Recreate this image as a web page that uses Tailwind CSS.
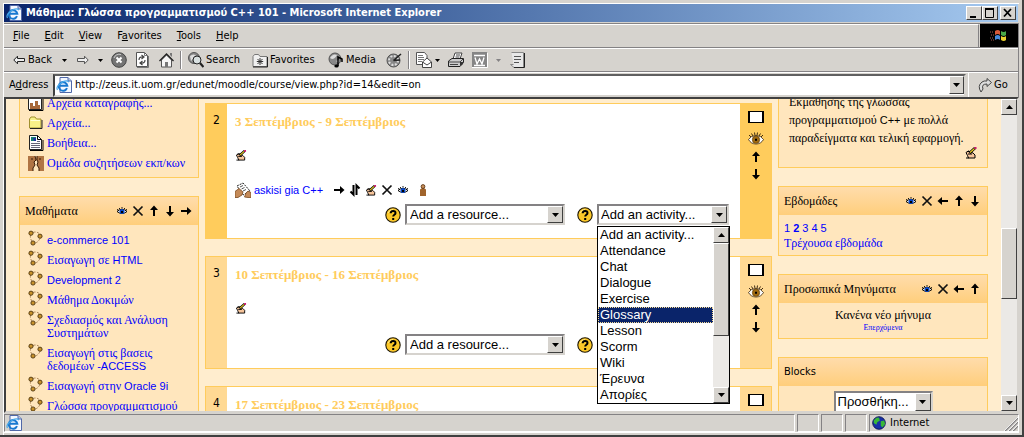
<!DOCTYPE html>
<html lang="el">
<head>
<meta charset="utf-8">
<title>Μάθημα: Γλώσσα προγραμματισμού C++ 101 - Microsoft Internet Explorer</title>
<script src="https://cdn.jsdelivr.net/npm/@tailwindcss/browser@4"></script>
</head>
<body class="h-screen overflow-hidden bg-[#d6d3ce] font-['DejaVu_Sans_Condensed','DejaVu_Sans',sans-serif] text-[11px] leading-4 text-black">
<svg class="hidden" aria-hidden="true">
  <symbol id="ie" viewBox="0 0 16 16"><path d="M4 .5h8l3.500 3.500v11.500H4z" fill="#f4f8ff" stroke="#5068a8"/><path d="M12 .5V4h3.500" fill="#b8c8e8" stroke="#5068a8"/><path d="M11 11.200A4.300 4.300 0 1 1 11.300 8.700H4" fill="none" stroke="#1878d0" stroke-width="2"/><path d="M1.500 13C-1 9 9 1.500 13 5" fill="none" stroke="#48a8e8" stroke-width="1.200"/></symbol>
  <symbol id="arr-r" viewBox="0 0 16 16"><path d="M3 7h6V4l4.500 4L9 12V9H3z" fill="#000"/></symbol>
  <symbol id="arr-l" viewBox="0 0 16 16"><path d="M13 7H7V4L2.500 8 7 12V9h6z" fill="#000"/></symbol>
  <symbol id="arr-u" viewBox="0 0 16 16"><path d="M7 13V7H4l4-4.500L12 7H9v6z" fill="#000"/></symbol>
  <symbol id="arr-d" viewBox="0 0 16 16"><path d="M7 3v6H4l4 4.500L12 9H9V3z" fill="#000"/></symbol>
  <symbol id="updown" viewBox="0 0 16 16"><path d="M6.500 3v9.500L3.500 9.500M9.500 13V3.500l3 3" fill="none" stroke="#000" stroke-width="2"/></symbol>
  <symbol id="cross" viewBox="0 0 16 16"><path d="m3.500 3.500 9 9M12.500 3.500l-9 9" fill="none" stroke="#111" stroke-width="1.700"/></symbol>
  <symbol id="eye" viewBox="0 0 16 16"><path d="M3 8.500Q8 4 13 8.500 8 12.500 3 8.500z" fill="#fff" stroke="#000"/><circle cx="8" cy="8.500" r="2.500" fill="#0848c8"/><path d="M7 8h2v2H7z" fill="#000"/><path d="M3 6.500 4.500 7M5 5l1 1M8 4v1.500M11 5l-1 1M13 6.500 11.500 7" stroke="#000" stroke-width=".9"/></symbol>
  <symbol id="bigeye" viewBox="0 0 16 16"><path d="M.5 9.500Q3 5.500 8 5.500t7.500 4Q13 14 8 14T.5 9.500z" fill="#fff" stroke="#3a2408" stroke-width=".8"/><circle cx="8" cy="9.700" r="3.700" fill="#a06a10" stroke="#5a3a08" stroke-width=".6"/><path d="M7 8.700h2v2H7z" fill="#000"/><path d="M1 5l2 2M3.500 3.500 5 6M6.500 2.500 7 5.500M9.500 2.500 9 5.500M12.500 3.500 11 6M15 5l-2 2" stroke="#2a1804" stroke-width=".9"/></symbol>
  <symbol id="write" viewBox="0 0 12 12"><path d="M1 5.500 3.500 4 8 6l2 2v3H3.500L2.500 8.500z" fill="#f6c49a" stroke="#000"/><path d="M1 11h3M2 4.500h3M3 7h4" stroke="#000"/><path d="M4.500 6 10 1" stroke="#000" stroke-width="2.600"/><path d="M5 5.500 9.500 1.500" stroke="#f0d020" stroke-width="1.200"/><path d="M9.500 0h2v2h-2z" fill="#d01870"/></symbol>
  <symbol id="person" viewBox="0 0 8 12"><path d="M1 5.500 3 4h2l2 1.500V12H1z" fill="#a0642c"/><circle cx="4" cy="2.500" r="1.900" fill="#c8905c" stroke="#502808" stroke-width=".8"/></symbol>
  <symbol id="assign" viewBox="0 0 16 16"><path d="m2 4 6-3 7 8-7 4z" fill="#fff" stroke="#222" stroke-dasharray="2 1"/><path d="M5 5l3-1.500M6.500 7l3-1.500M8 9l3-1.500" stroke="#555"/><path d="M0 9.500 4 6.500l4 3.500-1 3-4 2.500H0zM9.500 15l1.500-4 2-2 3 1.500v5h-3z" fill="#c48a58" stroke="#7a4a20" stroke-width=".8"/></symbol>
  <symbol id="help" viewBox="0 0 16 16"><circle cx="8" cy="8" r="7.200" fill="#fcc828" stroke="#1c1400" stroke-width="1.100"/><path d="M3 6a5.500 5.500 0 0 1 5-3.500" stroke="#ffec90" fill="none"/><path d="M5.700 6.200c0-3 4.800-3 4.800-.3C10.500 7.800 8.200 7.600 8.200 9.500M8.200 11v2" fill="none" stroke="#000" stroke-width="2"/></symbol>
  <symbol id="course" viewBox="0 0 16 16"><path d="M5 2.500q4-1.500 6.500 1.500M12 8.500q-2 4-5 4.500M2.500 5q-.5 4 1.500 6" fill="none" stroke="#9a7040" stroke-width=".8" stroke-dasharray="2.500 1.500"/><g fill="#c8922c" stroke="#3c2808" stroke-width=".8"><circle cx="3" cy="3.200" r="2.100"/><circle cx="12" cy="6.200" r="2.100"/><circle cx="5" cy="13" r="2.100"/></g></symbol>
  <symbol id="folder" viewBox="0 0 16 16"><path d="M1.500 4 3 2h4l1.500 2H13v9H1.500z" fill="#f8f088" stroke="#a09030"/><path d="M2 13.500h12V5" stroke="#222" fill="none"/><path d="M2.500 5.500H12" stroke="#ffffd8"/></symbol>
  <symbol id="doc" viewBox="0 0 16 16"><path d="M1.500.5h8l4 4v10h-12z" fill="#fff" stroke="#222"/><path d="M9.500.5v4h4M2 15.500h13V5" fill="none" stroke="#000"/><path d="M3 2h5v4H3z" fill="#188070"/><path d="M5 3h3v3H6z" fill="#2030a0"/><path d="M9 6.500h3M3 8.500h9M3 10.500h9M3 12.500h9" stroke="#667"/></symbol>
  <symbol id="faces" viewBox="0 0 16 16"><path d="M0 1h7l1 4-2 2 1 3-2 3v3H0zM16 1H9L8 5l2 2-1 3 2 3v3h5z" fill="#b07444"/><path d="M7 1 8 5 6 7l1 3-2 3v3M9 1v4l1 2-1 3 2 3v3M3 4h2M11 4h2" stroke="#3a1c08" fill="none"/></symbol>
  <symbol id="log" viewBox="0 0 16 16"><path d="M.5.500h13v14H.5z" fill="#fff" stroke="#222"/><path d="M2 14V8h3v3h2V6h3v4h2v4z" fill="#a86838"/><path d="M1 15.500h14V2" stroke="#000" fill="none"/></symbol>
  <symbol id="tri-d" viewBox="0 0 7 4"><path d="M0 0h7L3.500 4z"/></symbol>
  <symbol id="tri-u" viewBox="0 0 7 4"><path d="M0 4h7L3.500 0z"/></symbol>
</svg>

<div class="flex h-full flex-col border-r-2 border-b-2 border-[#404040] p-[3px] pb-0">
<div class="flex min-h-0 flex-1 flex-col border-t border-l border-white">

<header class="mr-px flex h-[19px] shrink-0 items-center gap-1 border-b border-[#d6d3ce] bg-linear-to-r from-[#0a246a] to-[#a6caf0] bg-clip-padding px-[2px] text-white">
  <svg class="size-4"><use href="#ie"/></svg>
  <h1 class="flex-1 whitespace-nowrap text-[11px] font-bold">Μάθημα: Γλώσσα προγραμματισμού C++ 101 - Microsoft Internet Explorer</h1>
  <div class="flex text-black">
    <button aria-label="Minimize" class="h-[14px] w-4 border border-white border-r-[#404040] border-b-[#404040] bg-[#d6d3ce]"><svg viewBox="0 0 14 12" class="size-full"><path d="M3 9h6v2H3z"/></svg></button>
    <button aria-label="Maximize" class="h-[14px] w-4 border border-white border-r-[#404040] border-b-[#404040] bg-[#d6d3ce]"><svg viewBox="0 0 14 12" class="size-full"><path d="M2.500 2v8.500h8V2M2 2h9" fill="none" stroke="#000"/><path d="M2 1h9v2H2z"/></svg></button>
    <button aria-label="Close" class="ml-[2px] h-[14px] w-4 border border-white border-r-[#404040] border-b-[#404040] bg-[#d6d3ce]"><svg viewBox="0 0 14 12" class="size-full"><path d="m3 2 7 7.500M10 2 3 9.500" stroke="#000" stroke-width="1.800"/></svg></button>
  </div>
</header>

<div class="shrink-0 border-t border-r border-[#848284]">
<nav class="flex h-6 items-stretch border-b border-[#848284]">
  <div class="flex flex-1 items-center gap-[15px] border-t border-r border-t-white border-r-[#848284] pl-[9px]">
    <button><u>F</u>ile</button><button><u>E</u>dit</button><button><u>V</u>iew</button><button>F<u>a</u>vorites</button><button><u>T</u>ools</button><button><u>H</u>elp</button>
  </div>
  <div class="ml-px flex w-[38px] items-center justify-center bg-black">
    <svg viewBox="0 0 20 16" class="h-4 w-5"><path d="M6 3q3-2 5 0v4q-2-2-5 0z" fill="#d85838"/><path d="M12 3q3 2 5 0v4q-2 2-5 0z" fill="#48a848"/><path d="M6 8q3-2 5 0v4q-2-2-5 0z" fill="#4888d8"/><path d="M12 8q3 2 5 0v4q-2 2-5 0z" fill="#e8d030"/><path d="M1 4h3M2 7h3M1 10h3M2 12h3" stroke="#a85850" stroke-dasharray="1 1"/></svg>
  </div>
</nav>
<div class="flex h-6 items-center border-t border-b border-t-white border-b-[#848284] pl-[9px]">
  <button class="flex w-[49px] items-center gap-[3px]"><svg viewBox="0 0 12 10" class="h-[10px] w-3"><path d="M.8 5 4.500 1.200V3.500h7v3h-7v2.300z" fill="#eee" stroke="#222"/></svg>Back</button>
  <svg class="h-[3px] w-[5px]"><use href="#tri-d"/></svg>
  <button aria-label="Forward" class="ml-[10px]"><svg viewBox="0 0 12 10" class="h-[10px] w-3"><path d="M11.200 5 7.500 1.200V3.500h-7v3h7v2.300z" fill="#eee" stroke="#555"/></svg></button>
  <svg class="ml-[9px] h-[3px] w-[5px]"><use href="#tri-d"/></svg>
  <button aria-label="Stop" class="ml-2"><svg viewBox="0 0 16 16" class="size-4"><circle cx="8" cy="8" r="7.300" fill="#747474" stroke="#444"/><path d="M3 6a5.500 5.500 0 0 1 7-3.500" stroke="#ccc" fill="none"/><path d="m5.500 5.500 5 5M10.500 5.500l-5 5" stroke="#fff" stroke-width="2"/></svg></button>
  <button aria-label="Refresh" class="ml-2"><svg viewBox="0 0 14 16" class="h-4 w-[14px]"><path d="M1.500.5h8l3 3v11h-11z" fill="#fff" stroke="#555"/><path d="M9.500.5v3h3M2 15.500h11.500V4" fill="none" stroke="#777"/><path d="M4 8q0-3.500 4-3M6.500 3 9 5 6.500 7M10 8q0 3.500-4 3M7.500 9 5 11l2.500 2" fill="none" stroke="#444" stroke-width="1.200"/></svg></button>
  <button aria-label="Home" class="ml-[10px]"><svg viewBox="0 0 15 16" class="h-4 w-[15px]"><path d="M2.500 8v7h10V8l-5-5z" fill="#f6f6f6" stroke="#555"/><path d="m.5 9 7-7 7 7" fill="none" stroke="#222" stroke-width="1.300"/><path d="M11 1h2v4l-2-2z" fill="#777"/><path d="M6 10h3v5H6z" fill="#777"/></svg></button>
  <i class="mx-[6px] h-[18px] w-[2px] border-l border-[#848284] bg-white"></i>
  <button class="flex w-16 items-center gap-[2px]"><svg viewBox="0 0 16 16" class="size-4"><circle cx="6" cy="6" r="5.500" fill="#888" stroke="#555"/><path d="M2 4q4-3 6 0-2 2-5 5" fill="#ddd"/><circle cx="9" cy="8" r="4" fill="#d8e0e0" stroke="#222"/><path d="m12 11 3.500 4" stroke="#222" stroke-width="2.200"/></svg>Search</button>
  <button class="flex w-[76px] items-center gap-[2px]"><svg viewBox="0 0 16 16" class="size-4"><path d="M1 4.500 2.500 2.500h4L8 4.500h7v10H1z" fill="#f0f0f0" stroke="#777"/><path d="M1 15h14.500V5" fill="none" stroke="#222"/><path d="M8 6v7M4.800 9.500h6.400M5.500 7l5 5M10.500 7l-5 5" stroke="#333"/></svg>Favorites</button>
  <button class="flex w-[58px] items-center gap-[2px]"><svg viewBox="0 0 16 16" class="size-4"><circle cx="7" cy="7" r="6" fill="#888" stroke="#555"/><path d="M2 6q3-5 7-3-2 4-5 4zM8 9l3-1v3z" fill="#ddd"/><path d="M10 14V5l4 2v3" fill="none" stroke="#000" stroke-width="1.500"/><ellipse cx="8.500" cy="14" rx="2.200" ry="1.500"/></svg>Media</button>
  <button aria-label="History"><svg viewBox="0 0 16 16" class="size-4"><circle cx="7.500" cy="8.500" r="6.500" fill="#888" stroke="#555"/><circle cx="7.500" cy="8.500" r="4.500" fill="none" stroke="#ddd" stroke-width="2" stroke-dasharray="2 1.500"/><path d="M7.500 8.500 15 2M7.500 8.500 14 8" stroke="#222" stroke-width="1.600"/></svg></button>
  <i class="mx-[6px] h-[18px] w-[2px] border-l border-[#848284] bg-white"></i>
  <button aria-label="Mail"><svg viewBox="0 0 16 16" class="size-4"><path d="M.5.500h8l2.500 3v9H.5z" fill="#fff" stroke="#555"/><path d="M2 3.500h5M2 5.500h6M2 7.500h6M2 9.500h4" stroke="#777"/><path d="M6.500 10 11 6l4.500 4v5.500h-9z" fill="#fff" stroke="#444"/><path d="m6.500 10 4.500 3 4.500-3" fill="none" stroke="#444"/></svg></button>
  <svg class="ml-[3px] h-[3px] w-[5px]"><use href="#tri-d"/></svg>
  <button aria-label="Print" class="ml-2"><svg viewBox="0 0 16 16" class="size-4"><path d="M5 7 7 1h7l-2 6z" fill="#fff" stroke="#444"/><path d="M.5 9 4 6.500h11.500v4L12 14.500H.5z" fill="#ccc" stroke="#222"/><path d="M.5 10H12l3-3M2 12.500h8M8 3h4M7.500 5h4" fill="none" stroke="#444"/><path d="M12 10h3v2l-3 2z" fill="#333"/></svg></button>
  <button aria-label="Edit with Word" class="ml-2"><svg viewBox="0 0 16 16" class="size-4"><path d="M0 0h15v15H0z" fill="#858585"/><path d="M2 3.500h11M3 5.500 5 12l2.500-5L10 12l2-6.500M2 13.500h11" fill="none" stroke="#fff" stroke-width="1.300"/><path d="M0 15.500h15.500V1" fill="none" stroke="#fff"/></svg></button>
  <svg class="ml-2 h-[3px] w-[5px] fill-[#848284]"><use href="#tri-d"/></svg>
  <button aria-label="Discuss" class="ml-[9px]"><svg viewBox="0 0 16 16" class="size-4"><path d="M1.500.5h12v15H4l-3.500-3h3" fill="#e8e8e8" stroke="#888"/><path d="M14.500 1v14.500H4" fill="none" stroke="#222"/><path d="M4 4.500h7M4 7.500h7M4 10.500h5" stroke="#555"/></svg></button>
</div>
<form class="flex h-[25px] items-center border-t border-white pl-[5px]">
  <label for="addr" class="w-11">A<u>d</u>dress</label>
  <div class="flex h-[23px] flex-1 items-center border-2 border-[#404040] border-t-[#606060] border-r-[#d6d3ce] border-b-[#d6d3ce] bg-white pl-px">
    <svg class="size-4"><use href="#ie"/></svg>
    <input id="addr" class="ml-[3px] min-w-0 flex-1 bg-white outline-none" value="http://zeus.it.uom.gr/edunet/moodle/course/view.php?id=14&amp;edit=on">
    <button type="button" aria-label="Address list" class="flex h-[18px] w-[15px] items-center justify-center border border-white border-r-[#404040] border-b-[#404040] bg-[#d6d3ce]"><svg class="h-1 w-[7px]"><use href="#tri-d"/></svg></button>
  </div>
  <button type="button" class="ml-[2px] flex h-full w-[50px] items-center gap-[2px] border-l border-white pl-[9px]"><svg viewBox="0 0 14 16" class="h-4 w-[14px]"><path d="M3 15Q-1 9 4 5q2-1.500 5-1V1.500l4.500 4L9 9.500V7Q3 7 5 12z" fill="#ddd" stroke="#444"/></svg>Go</button>
</form>
</div>

<div class="flex min-h-0 flex-1 border-2 border-[#404040] border-r-[#d6d3ce] border-b-[#d6d3ce] bg-[#ffedce]">
<main class="grid min-w-0 flex-1 grid-cols-[180px_1fr_210px] gap-[6px] overflow-hidden px-[13px] font-['Liberation_Serif',serif] text-[12px]">

  <aside class="flex min-w-0 flex-col gap-[18px]">
    <section class="-mt-[6px] border border-t-0 border-[#ffcc5c] bg-[#ffe6bd] px-2 pb-1 leading-5">
      <a href="#" class="flex items-center gap-[3px] text-[#0000ff]"><svg class="size-4"><use href="#log"/></svg>Αρχεία καταγραφής...</a>
      <a href="#" class="flex items-center gap-[3px] text-[#0000ff]"><svg class="size-4"><use href="#folder"/></svg>Αρχεία...</a>
      <a href="#" class="flex items-center gap-[3px] text-[#0000ff]"><svg class="size-4"><use href="#doc"/></svg>Βοήθεια...</a>
      <a href="#" class="flex items-center gap-[3px] whitespace-nowrap text-[#0000ff]"><svg class="size-4"><use href="#faces"/></svg>Ομάδα συζητήσεων εκπ/κων</a>
    </section>
    <section class="border border-[#ffcc5c] bg-[#ffe6bd]">
      <div class="flex h-7 items-center bg-linear-to-b from-[#ffdcab] to-[#ffce7b] pr-1 pl-[5px]">
        <h2 class="flex-1">Μαθήματα</h2>
        <svg class="size-4"><use href="#eye"/></svg><svg class="size-4"><use href="#cross"/></svg><svg class="size-4"><use href="#arr-u"/></svg><svg class="size-4"><use href="#arr-d"/></svg><svg class="size-4"><use href="#arr-r"/></svg>
      </div>
      <ul class="pt-[5px] pl-2 leading-[13px] text-[#0000ff]">
        <li class="flex gap-[3px] pb-[7px]"><svg class="-mb-1 size-4 shrink-0"><use href="#course"/></svg><a href="#" class="-mb-1 pt-1 font-['Liberation_Sans',sans-serif] text-[11px]">e-commerce 101</a></li>
        <li class="flex gap-[3px] pb-[7px]"><svg class="-mb-1 size-4 shrink-0"><use href="#course"/></svg><a href="#" class="-mb-1 pt-1">Εισαγωγη σε <span class="font-['Liberation_Sans',sans-serif] text-[11px]">HTML</span></a></li>
        <li class="flex gap-[3px] pb-[7px]"><svg class="-mb-1 size-4 shrink-0"><use href="#course"/></svg><a href="#" class="-mb-1 pt-1 font-['Liberation_Sans',sans-serif] text-[11px]">Development 2</a></li>
        <li class="flex gap-[3px] pb-[7px]"><svg class="-mb-1 size-4 shrink-0"><use href="#course"/></svg><a href="#" class="-mb-1 pt-1">Μάθημα Δοκιμών</a></li>
        <li class="flex gap-[3px] pb-[7px]"><svg class="-mb-1 size-4 shrink-0"><use href="#course"/></svg><a href="#" class="-mb-1 pt-1">Σχεδιασμός και Ανάλυση<br>Συστημάτων</a></li>
        <li class="flex gap-[3px] pb-[7px]"><svg class="-mb-1 size-4 shrink-0"><use href="#course"/></svg><a href="#" class="-mb-1 pt-1">Εισαγωγή στις βασεις<br>δεδομέων <span class="font-['Liberation_Sans',sans-serif] text-[11px]">-ACCESS</span></a></li>
        <li class="flex gap-[3px] pb-[7px]"><svg class="-mb-1 size-4 shrink-0"><use href="#course"/></svg><a href="#" class="-mb-1 pt-1">Εισαγωγή στην <span class="font-['Liberation_Sans',sans-serif] text-[11px]">Oracle 9i</span></a></li>
        <li class="flex gap-[3px] pb-[7px]"><svg class="-mb-1 size-4 shrink-0"><use href="#course"/></svg><a href="#" class="-mb-1 pt-1">Γλώσσα προγραμματισμού</a></li>
      </ul>
    </section>
  </aside>

  <div class="flex min-w-0 flex-col gap-[17px] pt-1">
    <section class="grid shrink-0 grid-cols-[21px_1fr_31px] border border-[#ffcc5c] bg-[#ffcc5c]">
      <div class="pt-2 text-center font-['DejaVu_Sans_Condensed',sans-serif]">2</div>
      <div class="bg-white pt-[9px] pr-[11px] pb-[13px] pl-2">
        <h3 class="text-[13px] leading-[18px] font-bold text-[#ffcc5c]">3 Σεπτέμβριος - 9 Σεπτέμβριος</h3>
        <button aria-label="Edit" class="mt-4 flex h-4 items-center"><svg class="h-[11px] w-3"><use href="#write"/></svg></button>
        <div class="mt-[18px] flex h-[18px] items-center">
          <svg class="size-4"><use href="#assign"/></svg>
          <a href="#" class="mr-2 ml-[3px] font-['Liberation_Sans',sans-serif] text-[11px] text-[#0000ff]">askisi gia C++</a>
          <svg class="size-4"><use href="#arr-r"/></svg><svg class="size-4"><use href="#updown"/></svg><svg class="mx-[2px] h-[11px] w-3"><use href="#write"/></svg><svg class="size-4"><use href="#cross"/></svg><svg class="size-4"><use href="#eye"/></svg><svg class="ml-2 h-3 w-2"><use href="#person"/></svg>
        </div>
        <div class="mt-[5px] flex h-[21px] items-center justify-end font-['Liberation_Sans',sans-serif] text-[13px]">
          <svg class="mr-1 size-4"><use href="#help"/></svg>
          <div class="flex h-full w-40 border-2 border-[#848284] border-r-[#d6d3ce] border-b-[#d6d3ce] bg-white pl-[3px]"><select aria-label="Add a resource" class="min-w-0 flex-1 appearance-none outline-none"><option>Add a resource...</option></select><span class="flex w-4 items-center justify-center border border-white border-r-[#404040] border-b-[#404040] bg-[#d6d3ce]"><svg class="h-1 w-[7px]"><use href="#tri-d"/></svg></span></div>
          <svg class="mr-1 ml-3 size-4"><use href="#help"/></svg>
          <div class="relative flex h-full w-[132px] border-2 border-[#848284] border-r-[#d6d3ce] border-b-[#d6d3ce] bg-white pl-[2px]"><select aria-label="Add an activity" class="min-w-0 flex-1 appearance-none outline-none"><option>Add an activity...</option></select><span class="flex w-4 items-center justify-center border border-white border-r-[#404040] border-b-[#404040] bg-[#d6d3ce]"><svg class="h-1 w-[7px]"><use href="#tri-d"/></svg></span>
            <div class="absolute top-[20px] -left-[2px] z-10 flex w-[133px] border border-black bg-white">
              <ul role="listbox" aria-label="Activities" class="flex-1 leading-4">
                <li role="option" class="pl-[2px]">Add an activity...</li><li role="option" class="pl-[2px]">Attendance</li><li role="option" class="pl-[2px]">Chat</li><li role="option" class="pl-[2px]">Dialogue</li><li role="option" class="pl-[2px]">Exercise</li><li role="option" aria-selected="true" class="bg-[#0a246a] pl-[2px] text-white outline-1 -outline-offset-1 outline-dotted outline-[#f5db95]">Glossary</li><li role="option" class="pl-[2px]">Lesson</li><li role="option" class="pl-[2px]">Scorm</li><li role="option" class="pl-[2px]">Wiki</li><li role="option" class="pl-[2px]">Έρευνα</li><li role="option" class="pl-[2px]">Απορίες</li>
              </ul>
              <div class="flex w-4 flex-col bg-[#ebe9e6]">
                <span class="flex h-4 items-center justify-center border border-white border-r-[#404040] border-b-[#404040] bg-[#d6d3ce]"><svg class="h-1 w-[7px]"><use href="#tri-u"/></svg></span>
                <span class="h-[93px] border border-white border-r-[#404040] border-b-[#404040] bg-[#d6d3ce]"></span>
                <span class="mt-auto flex h-4 items-center justify-center border border-white border-r-[#404040] border-b-[#404040] bg-[#d6d3ce]"><svg class="h-1 w-[7px]"><use href="#tri-d"/></svg></span>
              </div>
            </div>
          </div>
        </div>
      </div>
      <div class="flex flex-col items-center pt-[7px]"><span class="h-3 w-4 border-x-2 border-y border-black bg-white"></span><svg class="mt-[7px] size-4"><use href="#bigeye"/></svg><svg class="mt-[3px] size-4"><use href="#arr-u"/></svg><svg class="mt-px size-4"><use href="#arr-d"/></svg></div>
    </section>

    <section class="grid shrink-0 grid-cols-[21px_1fr_31px] border border-[#ffcc5c] bg-[#ffd993]">
      <div class="pt-2 text-center font-['DejaVu_Sans_Condensed',sans-serif]">3</div>
      <div class="bg-white pt-[9px] pr-[11px] pb-[13px] pl-2">
        <h3 class="text-[13px] leading-[18px] font-bold text-[#ffcc5c]">10 Σεπτέμβριος - 16 Σεπτέμβριος</h3>
        <button aria-label="Edit" class="mt-4 flex h-4 items-center"><svg class="h-[11px] w-3"><use href="#write"/></svg></button>
        <div class="mt-[18px] flex h-[21px] items-center justify-end font-['Liberation_Sans',sans-serif] text-[13px]">
          <svg class="mr-1 size-4"><use href="#help"/></svg>
          <div class="flex h-full w-40 border-2 border-[#848284] border-r-[#d6d3ce] border-b-[#d6d3ce] bg-white pl-[3px]"><select aria-label="Add a resource" class="min-w-0 flex-1 appearance-none outline-none"><option>Add a resource...</option></select><span class="flex w-4 items-center justify-center border border-white border-r-[#404040] border-b-[#404040] bg-[#d6d3ce]"><svg class="h-1 w-[7px]"><use href="#tri-d"/></svg></span></div>
          <svg class="mr-1 ml-3 size-4"><use href="#help"/></svg>
          <div class="h-full w-[132px]"></div>
        </div>
      </div>
      <div class="flex flex-col items-center pt-[7px]"><span class="h-3 w-4 border-x-2 border-y border-black bg-white"></span><svg class="mt-[7px] size-4"><use href="#bigeye"/></svg><svg class="mt-[3px] size-4"><use href="#arr-u"/></svg><svg class="mt-px size-4"><use href="#arr-d"/></svg></div>
    </section>

    <section class="grid shrink-0 grid-cols-[21px_1fr_31px] border border-[#ffcc5c] bg-[#ffd993]">
      <div class="pt-2 text-center font-['DejaVu_Sans_Condensed',sans-serif]">4</div>
      <div class="bg-white pt-[9px] pb-4 pl-2">
        <h3 class="text-[13px] leading-[18px] font-bold text-[#ffcc5c]">17 Σεπτέμβριος - 23 Σεπτέμβριος</h3>
      </div>
      <div class="flex flex-col items-center pt-[7px]"><span class="h-3 w-4 border-x-2 border-y border-black bg-white"></span></div>
    </section>
  </div>

  <aside class="flex min-w-0 flex-col gap-[18px]">
    <section class="-mt-[6px] border border-t-0 border-[#ffcc5c] bg-[#ffe6bd] pr-[10px] pb-2 pl-[10px]">
      <p class="leading-[18px]">Εκμάθησης της γλώσσας<br>προγραμματισμού <span class="font-['Liberation_Sans',sans-serif] text-[11px]">C++</span> με πολλά<br>παραδείγματα και τελική εφαρμογή.</p>
      <button aria-label="Edit" class="ml-auto block"><svg class="h-3 w-3"><use href="#write"/></svg></button>
    </section>
    <section class="border border-[#ffcc5c] bg-[#ffe6bd]">
      <div class="flex h-7 items-center bg-linear-to-b from-[#ffdcab] to-[#ffce7b] pr-1 pl-[5px]">
        <h2 class="flex-1">Εβδομάδες</h2>
        <svg class="size-4"><use href="#eye"/></svg><svg class="size-4"><use href="#cross"/></svg><svg class="size-4"><use href="#arr-l"/></svg><svg class="size-4"><use href="#arr-u"/></svg><svg class="size-4"><use href="#arr-d"/></svg>
      </div>
      <div class="px-[5px] pt-[6px] pb-1 leading-[15px] text-[#0000ff]">
        <p class="flex gap-[3px] font-['Liberation_Sans',sans-serif] text-[11px]"><a href="#">1</a><a href="#" class="font-bold">2</a><a href="#">3</a><a href="#">4</a><a href="#">5</a></p>
        <a href="#" class="block">Τρέχουσα εβδομάδα</a>
      </div>
    </section>
    <section class="border border-[#ffcc5c] bg-[#ffe6bd]">
      <div class="flex h-7 items-center bg-linear-to-b from-[#ffdcab] to-[#ffce7b] pr-1 pl-[5px]">
        <h2 class="flex-1">Προσωπικά Μηνύματα</h2>
        <svg class="size-4"><use href="#eye"/></svg><svg class="size-4"><use href="#cross"/></svg><svg class="size-4"><use href="#arr-l"/></svg><svg class="size-4"><use href="#arr-u"/></svg>
      </div>
      <div class="py-[5px] text-center"><p class="text-[12px] leading-[15px]">Κανένα νέο μήνυμα</p><a href="#" class="block text-[8px] leading-[10px] text-[#0000ff]">Επερχόμενα</a></div>
    </section>
    <section class="border border-[#ffcc5c] bg-[#ffe6bd]">
      <div class="flex h-7 items-center bg-linear-to-b from-[#ffdcab] to-[#ffce7b] pl-[5px] font-['DejaVu_Sans_Condensed',sans-serif] text-[11px]"><h2>Blocks</h2></div>
      <div class="flex justify-center pt-[5px] pb-3 font-['Liberation_Sans',sans-serif] text-[13px]">
        <div class="flex h-[22px] w-[99px] border-2 border-[#848284] border-r-[#d6d3ce] border-b-[#d6d3ce] bg-white pl-[2px]"><select aria-label="Blocks" class="min-w-0 flex-1 appearance-none outline-none"><option>Προσθήκη...</option></select><span class="flex w-4 items-center justify-center border border-white border-r-[#404040] border-b-[#404040] bg-[#d6d3ce]"><svg class="h-1 w-[7px]"><use href="#tri-d"/></svg></span></div>
      </div>
    </section>
  </aside>
</main>
<div class="flex w-4 shrink-0 flex-col bg-[#ebe9e6]">
  <span class="flex h-4 items-center justify-center border border-white border-r-[#404040] border-b-[#404040] bg-[#d6d3ce]"><svg class="h-1 w-[7px]"><use href="#tri-u"/></svg></span>
  <span class="mt-[113px] h-[71px] border border-white border-r-[#404040] border-b-[#404040] bg-[#d6d3ce]"></span>
  <span class="mt-auto flex h-4 items-center justify-center border border-white border-r-[#404040] border-b-[#404040] bg-[#d6d3ce]"><svg class="h-1 w-[7px]"><use href="#tri-d"/></svg></span>
</div>
</div>

<footer class="mb-[2px] flex h-5 shrink-0 gap-[2px] border-b border-white pt-px">
  <div class="flex flex-1 items-center border border-[#848284] border-r-white border-b-white pl-px"><svg class="size-4"><use href="#ie"/></svg></div>
  <div class="w-[22px] border border-[#848284] border-r-white border-b-white"></div>
  <div class="w-[22px] border border-[#848284] border-r-white border-b-white"></div>
  <div class="w-[22px] border border-[#848284] border-r-white border-b-white"></div>
  <div class="flex w-[150px] items-center border border-[#848284] border-r-white border-b-white pl-[2px]">
    <svg viewBox="0 0 16 16" class="mr-1 size-[14px]"><circle cx="8" cy="8" r="7.200" fill="#1830a8" stroke="#08104c"/><path d="M2 5q3-4 6-3l1 3-3 2-1 3-3-2zM10 6l4-1 1 4-3 4-2-2z" fill="#38b838"/></svg>
    <span class="flex-1">Internet</span>
    <svg viewBox="0 0 14 14" class="size-[14px] self-end"><path d="M1 14 14 1M5 14l9-9M9 14l5-5" stroke="#848284" stroke-width="1.500"/><path d="M0 14 14 0M4 14 14 4M8 14l6-6" stroke="#fff" stroke-width=".8"/></svg>
  </div>
</footer>
</div>
</div>
</body>
</html>
